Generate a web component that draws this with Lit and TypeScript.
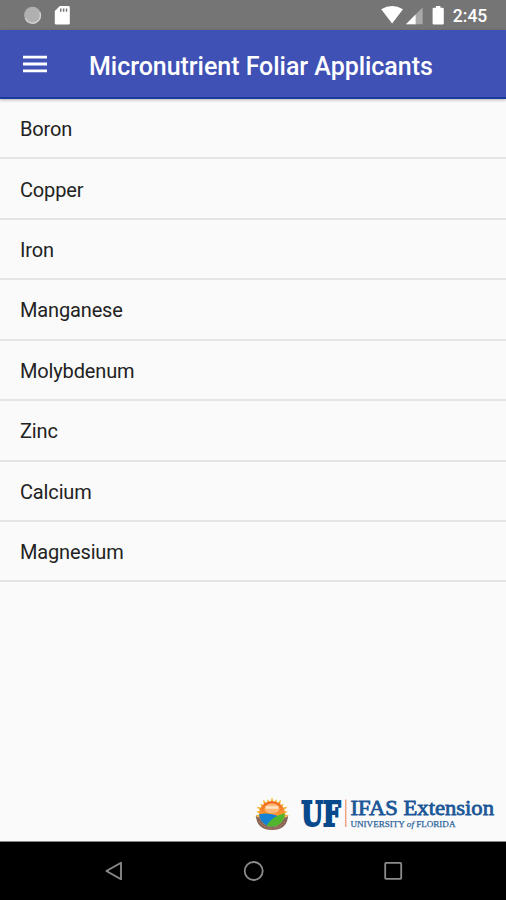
import { LitElement, html, css } from "lit";
import { customElement } from "lit/decorators.js";

@customElement("status-bar")
class StatusBar extends LitElement {
  static styles = css`
    :host { display: block; height: 30px; background: #757575; }
    svg { display: block; }
    .clock { font: 500 18px Roboto, sans-serif; fill: #fff; }
  `;
  render() {
    return html`<svg width="506" height="30" viewBox="0 0 506 30">
      <circle cx="32.5" cy="15.2" r="8.4" fill="#b0b0b0" />
      <path d="M25.5 18.5A7.8 7.8 0 0 0 39.8 12.2" fill="none" stroke="#d2d2d2" stroke-width="1.5" />
      <path d="M59.8 6H68.4Q69.8 6 69.8 7.4V23.2Q69.8 24.6 68.4 24.6H56.2Q54.8 24.6 54.8 23.2V11Z" fill="#fff" />
      <path d="M60.7 8.5v3.2M63.6 8.5v3.2M66.5 8.5v3.2" stroke="#777" stroke-width="1.5" />
      <path d="M381.2 9.2Q392 2.6 403 9.2L392.1 23.6Z" fill="#fff" />
      <path d="M422.6 7.6V24.2H406Z" fill="#a9a9a9" />
      <path d="M415.6 14.6V24.2H406Z" fill="#fff" />
      <path d="M436 6h4.4v1.7h2.2q1.2 0 1.2 1.2V23.2q0 1.2-1.2 1.2H433.8q-1.2 0-1.2-1.2V8.9q0-1.2 1.2-1.2H436Z" fill="#fff" />
      <text class="clock" x="452.8" y="22" textLength="34.5" lengthAdjust="spacingAndGlyphs">2:45</text>
    </svg>`;
  }
}

@customElement("extension-logo")
class ExtensionLogo extends LitElement {
  static styles = css`
    :host { display: block; }
    svg { display: block; }
    .mark { font: bold 34px "DejaVu Serif", serif; fill: #07498c; stroke: #07498c; stroke-width: 2; }
    .name { font: 22px "Liberation Serif", serif; fill: #1b5797; stroke: #1b5797; stroke-width: 0.8; }
    .school { font: 9px "Liberation Serif", serif; fill: #2c639d; stroke: #2c639d; stroke-width: 0.25; }
    .of { font-style: italic; }
  `;
  render() {
    const rays = Array.from({ length: 13 }, (_, i) => {
      const a = Math.PI * (1.03 - (i * 1.06) / 12);
      const p = (r: number, d: number) =>
        `${(17 + r * Math.cos(a + d)).toFixed(1)} ${(17.5 - r * Math.sin(a + d)).toFixed(1)}`;
      return `M${p(12, 0.14)}L${p(i % 2 ? 16 : 17.5, 0)}L${p(12, -0.14)}Z`;
    }).join("");
    return html`<svg width="242" height="48" viewBox="0 -8 242 48">
      <defs>
        <clipPath id="disc"><circle cx="17" cy="17" r="12.8" /></clipPath>
        <linearGradient id="sky" x1="0" y1="0" x2="0" y2="1">
          <stop offset="0" stop-color="#e8501c" /><stop offset=".6" stop-color="#ffa632" />
        </linearGradient>
      </defs>
      <path d="${rays}" fill="#f6b431" />
      <g clip-path="url(#disc)">
        <rect width="34" height="34" fill="url(#sky)" />
        <ellipse cx="17" cy="11.5" rx="7.5" ry="5" fill="#ffb878" />
        <path d="M11 10.5h12" stroke="#fff0d8" stroke-width="2.5" opacity=".8" />
        <path d="M3 17.5Q12 15 22 18.5V34H3Z" fill="#1682d2" />
        <path d="M10 31Q17 18 31 16V34H12Z" fill="#51b52d" />
      </g>
      <path d="M1 18Q2 21 4.2 20Q8 29.5 17 30Q26 29.5 29.8 20Q32 21 33 18Q33 32.500 17 33Q1 32.500 1 18Z" fill="#896353" />
      <path d="M4 24Q7 30.5 17 31.500Q27 30.5 30 24" fill="none" stroke="#b59484" stroke-width="1" stroke-dasharray="1.2 1.2" />
      <text class="mark" x="46.2" y="29" textLength="39.5" lengthAdjust="spacingAndGlyphs">UF</text>
      <path d="M90.7 2.5V30" stroke="#efa284" stroke-width="1.5" />
      <text class="name" x="95.5" y="18.4" textLength="143.5" lengthAdjust="spacingAndGlyphs">IFAS Extension</text>
      <text class="school" x="95.5" y="30.3" textLength="105" lengthAdjust="spacingAndGlyphs">UNIVERSITY <tspan class="of">of</tspan> FLORIDA</text>
    </svg>`;
  }
}

@customElement("navigation-bar")
class NavigationBar extends LitElement {
  static styles = css`
    :host { display: block; height: 58px; background: #000; }
    svg { display: block; }
  `;
  render() {
    return html`<svg width="506" height="58" viewBox="0 0 506 58" fill="none" stroke="#8c8c8c" stroke-width="1.8">
      <path d="M121 20.8V37.2L106.4 29Z" stroke-linejoin="round" />
      <circle cx="253.7" cy="29" r="9" />
      <rect x="385.2" y="20.9" width="16" height="16" rx=".8" />
    </svg>`;
  }
}

@customElement("app-root")
class AppRoot extends LitElement {
  static styles = css`
    :host {
      display: flex; flex-direction: column; height: 900px; width: 506px;
      background: #fafafa; font-family: Roboto, sans-serif; overflow: hidden;
    }
    .toolbar {
      flex: none; box-sizing: border-box; height: 69px; display: flex; align-items: center;
      background: #3f51b5; color: #fff; border-bottom: 2px solid #1a3a9f;
      box-shadow: 0 1px 3px rgba(0, 0, 0, 0.3);
    }
    .menu { width: 24px; height: 18px; margin-left: 23px; padding-top: 1px; display: block; }
    h1 {
      margin: 0 0 0 42px; padding-top: 6px; font-size: 25px; line-height: 30px;
      font-weight: 500; letter-spacing: -0.04px; white-space: nowrap;
    }
    ul { list-style: none; margin: 0; padding: 0; flex: 1; }
    li {
      box-sizing: border-box; height: 60.43px; padding: 2px 20px 0; display: flex; align-items: center;
      font-size: 20px; letter-spacing: -0.15px; color: #222; border-bottom: 2px solid #e4e4e4;
    }
    extension-logo { align-self: flex-end; margin-right: 9px; margin-bottom: 4px; }
    .edge { height: 1px; background: #858585; }
  `;
  private items = ["Boron", "Copper", "Iron", "Manganese", "Molybdenum", "Zinc", "Calcium", "Magnesium"];
  render() {
    return html`
      <status-bar></status-bar>
      <header class="toolbar">
        <svg class="menu" viewBox="0 0 24 18"><path d="M0 2.2H24M0 9H24M0 15.8H24" stroke="#fff" stroke-width="2.8" /></svg>
        <h1>Micronutrient Foliar Applicants</h1>
      </header>
      <ul>${this.items.map((item) => html`<li>${item}</li>`)}</ul>
      <extension-logo></extension-logo>
      <div class="edge"></div>
      <navigation-bar></navigation-bar>
    `;
  }
}
